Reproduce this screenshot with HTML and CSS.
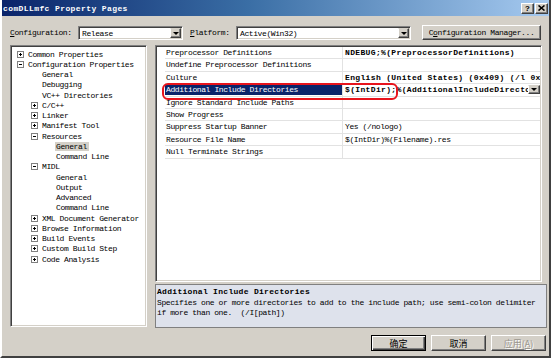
FILE: index.html
```html
<!DOCTYPE html>
<html lang="en">
<head>
    <meta charset="UTF-8">
    <title>comDLLmfc Property Pages</title>
    <link rel="stylesheet" href="styles.css">
</head>
<body>
    <div class="dialog">
        <div class="titlebar">
            <span class="title">comDLLmfc Property Pages</span>
            <div class="caption-btns">
                <span class="cap-btn help">?</span>
                <span class="cap-btn close">
                    <svg width="7" height="6" viewBox="0 0 7 6"><path d="M0.5 0.5 L6.5 5.5 M6.5 0.5 L0.5 5.5" stroke="#000" stroke-width="1.6"/></svg>
                </span>
            </div>
        </div>

        <div class="config-row">
            <span class="lbl lbl-config"><u>C</u>onfiguration:</span>
            <div class="combo combo-config">
                <span class="combo-text">Release</span>
                <span class="drop"></span>
            </div>
            <span class="lbl lbl-platform"><u>P</u>latform:</span>
            <div class="combo combo-platform">
                <span class="combo-text">Active(Win32)</span>
                <span class="drop"></span>
            </div>
            <div class="btn btn-manager">C<u>o</u>nfiguration Manager...</div>
        </div>

        <div class="main">
            <div class="tree">
                <div class="node"><span class="exp plus"></span>Common Properties</div>
                <div class="node"><span class="exp"></span>Configuration Properties</div>
                <div class="node d1"><span class="spacer"></span>General</div>
                <div class="node d1"><span class="spacer"></span>Debugging</div>
                <div class="node d1"><span class="spacer"></span>VC++ Directories</div>
                <div class="node d1"><span class="exp plus"></span>C/C++</div>
                <div class="node d1"><span class="exp plus"></span>Linker</div>
                <div class="node d1"><span class="exp plus"></span>Manifest Tool</div>
                <div class="node d1"><span class="exp"></span>Resources</div>
                <div class="node d2"><span class="spacer"></span><span class="tsel">General</span></div>
                <div class="node d2"><span class="spacer"></span>Command Line</div>
                <div class="node d1"><span class="exp"></span>MIDL</div>
                <div class="node d2"><span class="spacer"></span>General</div>
                <div class="node d2"><span class="spacer"></span>Output</div>
                <div class="node d2"><span class="spacer"></span>Advanced</div>
                <div class="node d2"><span class="spacer"></span>Command Line</div>
                <div class="node d1"><span class="exp plus"></span>XML Document Generator</div>
                <div class="node d1"><span class="exp plus"></span>Browse Information</div>
                <div class="node d1"><span class="exp plus"></span>Build Events</div>
                <div class="node d1"><span class="exp plus"></span>Custom Build Step</div>
                <div class="node d1"><span class="exp plus"></span>Code Analysis</div>
            </div>

            <div class="right">
                <div class="grid">
                    <div class="rows">
                        <div class="prow"><div class="pname">Preprocessor Definitions</div><div class="pval bold">NDEBUG;%(PreprocessorDefinitions)</div></div>
                        <div class="prow"><div class="pname">Undefine Preprocessor Definitions</div><div class="pval"></div></div>
                        <div class="prow"><div class="pname">Culture</div><div class="pval bold">English (United States) (0x409) (/l 0x409)</div></div>
                        <div class="prow sel"><div class="pname">Additional Include Directories</div><div class="pval bold">$(IntDir);%(AdditionalIncludeDirectories)<span class="drop val-drop"></span></div></div>
                        <div class="prow"><div class="pname">Ignore Standard Include Paths</div><div class="pval"></div></div>
                        <div class="prow"><div class="pname">Show Progress</div><div class="pval"></div></div>
                        <div class="prow"><div class="pname">Suppress Startup Banner</div><div class="pval">Yes (/nologo)</div></div>
                        <div class="prow"><div class="pname">Resource File Name</div><div class="pval">$(IntDir)%(Filename).res</div></div>
                        <div class="prow"><div class="pname">Null Terminate Strings</div><div class="pval"></div></div>
                    </div>
                    <div class="annotation"></div>
                </div>
                <div class="desc">
                    <div class="desc-title">Additional Include Directories</div>
                    <div class="desc-text">Specifies one or more directories to add to the include path; use semi-colon delimiter<br>if more than one.&nbsp; (/I[path])</div>
                </div>
            </div>
        </div>

        <div class="footer">
            <div class="btn btn-ok default">确定</div>
            <div class="btn btn-cancel">取消</div>
            <div class="btn btn-apply disabled">应用(<u>A</u>)</div>
        </div>
    </div>
</body>
</html>
```

FILE: styles.css
```css
* {
    box-sizing: border-box;
}
html, body {
    margin: 0;
    padding: 0;
}
body {
    width: 551px;
    height: 358px;
    overflow: hidden;
    background: #d4d0c8;
    font-family: "Liberation Mono", "DejaVu Sans Mono", monospace;
    font-size: 8px;
    letter-spacing: -0.4px;
    color: #000;
}
.dialog {
    width: 551px;
    height: 358px;
    display: flex;
    flex-direction: column;
    background: #d4d0c8;
    border: 2px solid;
    border-top: 0;
    border-color: #d4d0c8 #404040 #404040 #ffffff;
}

/* title bar */
.titlebar {
    height: 16px;
    display: flex;
    align-items: center;
    justify-content: space-between;
    padding: 0 1px 0 1px;
    background: linear-gradient(to right, #0a246a, #3a6ea5 45%, #a6caf0);
}
.title {
    color: #fff;
    font-weight: bold;
    letter-spacing: 0.4px;
}
.caption-btns {
    display: flex;
    gap: 1px;
}
.cap-btn {
    width: 13px;
    height: 11px;
    display: flex;
    align-items: center;
    justify-content: center;
    background: #d4d0c8;
    border: 1px solid;
    border-color: #fff #404040 #404040 #fff;
    box-shadow: inset -1px -1px #808080;
    font-weight: bold;
    font-size: 8px;
    letter-spacing: 0;
}

/* configuration row */
.config-row {
    display: flex;
    align-items: center;
    height: 15px;
    margin-top: 9px;
    padding-left: 8px;
}
.lbl-config {
    width: 68px;
}
.lbl-platform {
    width: 46px;
    margin-left: 7px;
}
.combo {
    display: flex;
    height: 14px;
    background: #fff;
    border: 1px solid;
    border-color: #808080 #fff #fff #808080;
    box-shadow: inset 1px 1px #404040, inset -1px -1px #d4d0c8;
    padding: 1px;
}
.combo-config {
    width: 105px;
}
.combo-platform {
    width: 175px;
}
.combo-text {
    flex: 1;
    padding-left: 2px;
    line-height: 11px;
    white-space: nowrap;
    overflow: hidden;
}
.drop {
    width: 11px;
    height: 100%;
    position: relative;
    background: #d4d0c8;
    border: 1px solid;
    border-color: #d4d0c8 #404040 #404040 #fff;
    box-shadow: inset -1px -1px #808080;
}
.drop::after {
    content: "";
    position: absolute;
    left: 2px;
    top: 3px;
    border-left: 3px solid transparent;
    border-right: 3px solid transparent;
    border-top: 3px solid #000;
}
.btn {
    display: flex;
    align-items: center;
    justify-content: center;
    background: #d4d0c8;
    border: 1px solid;
    border-color: #fff #404040 #404040 #fff;
    box-shadow: inset -1px -1px #808080;
    white-space: nowrap;
}
.btn-manager {
    width: 119px;
    height: 15px;
    margin-left: 11px;
}

/* main area */
.main {
    display: flex;
    gap: 8px;
    height: 283px;
    margin-top: 5px;
    padding: 0 2px 0 8px;
}
.tree {
    flex: none;
    width: 137px;
    height: 282px;
    background: #fff;
    border: 1px solid;
    border-color: #808080 #fff #fff #808080;
    box-shadow: inset 1px 1px #404040, inset -1px -1px #d4d0c8;
    padding: 3px 0 0 6px;
    overflow: hidden;
}
.node {
    height: 10.25px;
    display: flex;
    align-items: center;
    white-space: nowrap;
}
.d1 {
    padding-left: 14px;
}
.d2 {
    padding-left: 28px;
}
.exp {
    flex: none;
    width: 7px;
    height: 7px;
    margin-right: 4px;
    position: relative;
    border: 1px solid #808080;
    background: #fff;
}
.exp::before {
    content: "";
    position: absolute;
    left: 1px;
    top: 2px;
    width: 3px;
    height: 1px;
    background: #000;
}
.exp.plus::after {
    content: "";
    position: absolute;
    left: 2px;
    top: 1px;
    width: 1px;
    height: 3px;
    background: #000;
}
.spacer {
    flex: none;
    width: 11px;
}
.tsel {
    background: #d4d0c8;
    padding: 0 2px 0 1px;
    margin-left: -1px;
}

.right {
    flex: 1;
    min-width: 0;
    display: flex;
    flex-direction: column;
}
.grid {
    position: relative;
    height: 237px;
    margin-right: 5px;
    background: #fff;
    border: 1px solid;
    border-color: #808080 #fff #fff #808080;
    box-shadow: inset 1px 1px #404040, inset -1px -1px #d4d0c8;
    overflow: hidden;
}
.rows {
    margin: 1px 1px 0 9px;
}
.prow {
    display: flex;
    height: 12.4px;
    border-bottom: 1px solid #e2e2e2;
    line-height: 11.4px;
    white-space: nowrap;
}
.pname {
    flex: none;
    width: 177px;
    padding-left: 1px;
    overflow: hidden;
}
.pval {
    flex: 1;
    min-width: 0;
    position: relative;
    border-left: 1px solid #e2e2e2;
    padding-left: 2px;
    overflow: hidden;
}
.bold {
    font-weight: bold;
    letter-spacing: 0.35px;
}
.prow.sel .pname {
    background: #0a246a;
    color: #fff;
    box-shadow: inset 0 1px #fff, inset 0 -1px #fff;
}
.val-drop {
    position: absolute;
    right: 0;
    top: 1px;
    width: 12px;
    height: 9px;
}
.val-drop::after {
    top: 2px;
}
.annotation {
    position: absolute;
    left: 6px;
    top: 37px;
    width: 236px;
    height: 17px;
    border: 2px solid #e8141c;
    border-radius: 6px;
}

.desc {
    flex: 1;
    margin-top: 2px;
    background: #dee2ec;
    border: 1px solid #808080;
    padding: 2px 1px 0 1px;
    line-height: 10px;
    white-space: nowrap;
    overflow: hidden;
}
.desc-title {
    font-weight: bold;
    letter-spacing: 0.3px;
    margin-bottom: 1px;
}

/* footer buttons */
.footer {
    display: flex;
    justify-content: flex-end;
    gap: 5px;
    height: 16px;
    margin-top: 7px;
    padding-right: 3px;
}
.footer .btn {
    width: 55px;
    font-family: "Noto Sans CJK SC", sans-serif;
    font-size: 9px;
    letter-spacing: 0;
}
.btn.default {
    border: 1px solid #000;
    box-shadow: inset 1px 1px #fff, inset -1px -1px #404040, inset -2px -2px #808080;
}
.btn.disabled {
    color: #9a968e;
    text-shadow: 1px 1px #fff;
}
```
